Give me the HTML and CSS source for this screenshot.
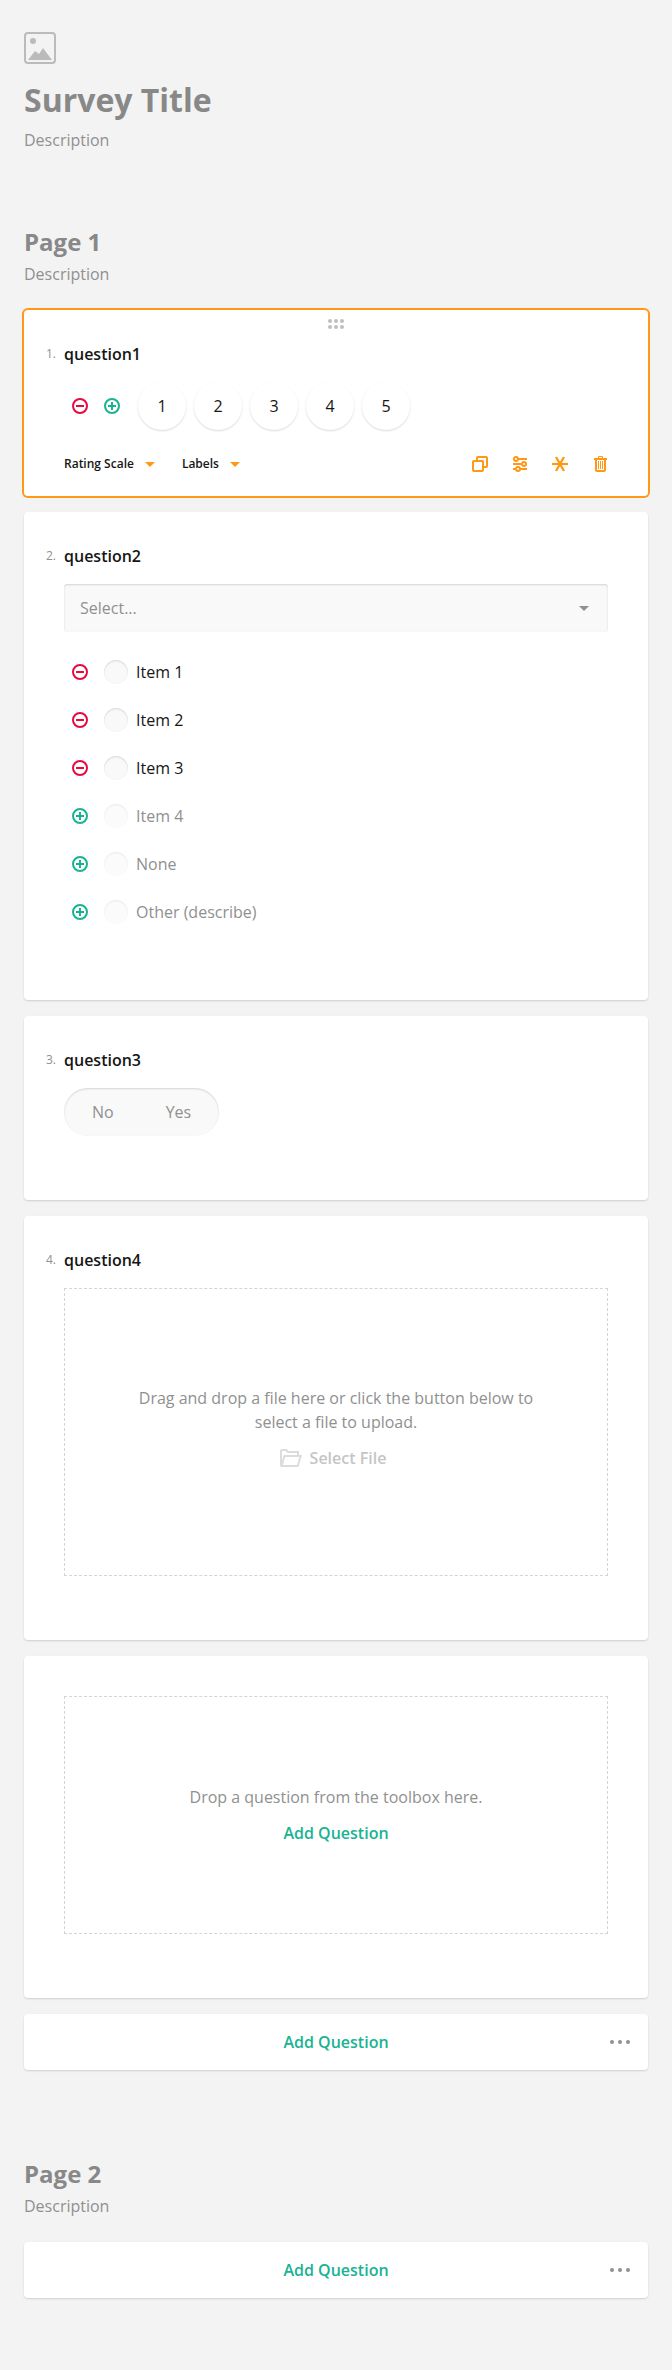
FILE: index.html
```html
<!DOCTYPE html>
<html lang="en">
<head>
<meta charset="utf-8">
<title>Survey Designer</title>
<link rel="stylesheet" href="styles.css">
</head>
<body>
<svg class="defs" width="0" height="0">
  <symbol id="minus" viewBox="0 0 16 16"><circle cx="8" cy="8" r="7" fill="none" stroke="currentColor" stroke-width="2"/><path d="M4 7h8v2H4z" fill="currentColor"/></symbol>
  <symbol id="plus" viewBox="0 0 16 16"><circle cx="8" cy="8" r="7" fill="none" stroke="currentColor" stroke-width="2"/><path d="M7 4h2v3h3v2H9v3H7V9H4V7h3z" fill="currentColor"/></symbol>
  <symbol id="arrow" viewBox="0 0 10 5"><path d="M0 0h10L5 5z" fill="currentColor"/></symbol>
  <symbol id="dots" viewBox="0 0 20 4"><g fill="currentColor"><circle cx="2" cy="2" r="2"/><circle cx="10" cy="2" r="2"/><circle cx="18" cy="2" r="2"/></g></symbol>
</svg>

<main class="survey">
  <header class="survey-header">
    <svg class="logo" viewBox="0 0 32 32"><rect x="1" y="1" width="30" height="30" rx="3" fill="none" stroke="currentColor" stroke-width="2"/><circle cx="9" cy="9" r="3" fill="currentColor"/><path d="M4 28l7-9 4 3 4-6 9 12z" fill="currentColor"/></svg>
    <h1 class="survey-title">Survey Title</h1>
    <p class="description">Description</p>
  </header>

  <section class="page">
    <h2 class="page-title">Page 1</h2>
    <p class="description">Description</p>
    <div class="cards">
      <article class="card card-selected">
        <svg class="handle" viewBox="0 0 16 10"><g fill="#bfbfbf"><circle cx="2" cy="2" r="2"/><circle cx="8" cy="2" r="2"/><circle cx="14" cy="2" r="2"/><circle cx="2" cy="8" r="2"/><circle cx="8" cy="8" r="2"/><circle cx="14" cy="8" r="2"/></g></svg>
        <h3 class="question"><span class="number">1.</span>question1</h3>
        <div class="rating">
          <svg class="icon remove"><use href="#minus"/></svg>
          <svg class="icon add"><use href="#plus"/></svg>
          <div class="rates"><span class="rate">1</span><span class="rate">2</span><span class="rate">3</span><span class="rate">4</span><span class="rate">5</span></div>
        </div>
        <footer class="toolbar">
          <span class="choice">Rating Scale<svg class="arrow"><use href="#arrow"/></svg></span>
          <span class="choice">Labels<svg class="arrow"><use href="#arrow"/></svg></span>
          <div class="actions">
            <svg class="icon" viewBox="0 0 16 16" fill="none" stroke="currentColor" stroke-width="2"><rect x="1" y="5" width="10" height="10" rx="1"/><path d="M5 5V2a1 1 0 0 1 1-1h8a1 1 0 0 1 1 1v8a1 1 0 0 1-1 1h-3"/></svg>
            <svg class="icon" viewBox="0 0 16 16" fill="none" stroke="currentColor" stroke-width="2"><path d="M6 3h9M1 8h8M1 13h2M8 13h7"/><circle cx="4" cy="3" r="2"/><circle cx="12" cy="8" r="2"/><circle cx="6" cy="13" r="2"/></svg>
            <svg class="icon" viewBox="0 0 16 16" fill="none" stroke="currentColor" stroke-width="2.300"><path d="M0 8h16" stroke-width="2"/><path d="M4 1l8 14M12 1L4 15"/></svg>
            <svg class="icon" viewBox="0 0 16 16" fill="none" stroke="currentColor"><path d="M2 3h13" stroke-width="2"/><path d="M6.500 2.500v-2h4v2M6.500 5v8M8.500 5v8M10.500 5v8"/><path d="M4 3v11a1 1 0 0 0 1 1h7a1 1 0 0 0 1-1V3" stroke-width="2"/></svg>
          </div>
        </footer>
      </article>

      <article class="card">
        <h3 class="question"><span class="number">2.</span>question2</h3>
        <div class="select">Select...<svg class="arrow"><use href="#arrow"/></svg></div>
        <ul class="items">
          <li class="item"><svg class="icon remove"><use href="#minus"/></svg><span class="radio"></span>Item 1</li>
          <li class="item"><svg class="icon remove"><use href="#minus"/></svg><span class="radio"></span>Item 2</li>
          <li class="item"><svg class="icon remove"><use href="#minus"/></svg><span class="radio"></span>Item 3</li>
          <li class="item item-off"><svg class="icon add"><use href="#plus"/></svg><span class="radio"></span>Item 4</li>
          <li class="item item-off"><svg class="icon add"><use href="#plus"/></svg><span class="radio"></span>None</li>
          <li class="item item-off"><svg class="icon add"><use href="#plus"/></svg><span class="radio"></span>Other (describe)</li>
        </ul>
      </article>

      <article class="card">
        <h3 class="question"><span class="number">3.</span>question3</h3>
        <div class="toggle"><span>No</span><span>Yes</span></div>
      </article>

      <article class="card">
        <h3 class="question"><span class="number">4.</span>question4</h3>
        <div class="drop drop-file">
          <p class="drop-text">Drag and drop a file here or click the button below to select a file to upload.</p>
          <div class="select-file"><svg class="folder" viewBox="0 0 22 18" fill="none" stroke="currentColor" stroke-width="2"><path d="M1 16.500V2a1 1 0 0 1 1-1h4l2 2h10v4"/><path d="M1.500 17L4.500 7h16.200L17.700 17z"/></svg>Select File</div>
        </div>
      </article>

      <article class="card card-empty">
        <div class="drop drop-question">
          <p class="drop-text">Drop a question from the toolbox here.</p>
          <span class="add-link">Add Question</span>
        </div>
      </article>

      <div class="add-bar"><span class="add-link">Add Question</span><svg class="dots"><use href="#dots"/></svg></div>
    </div>
  </section>

  <section class="page page-next">
    <h2 class="page-title">Page 2</h2>
    <p class="description">Description</p>
    <div class="cards">
      <div class="add-bar"><span class="add-link">Add Question</span><svg class="dots"><use href="#dots"/></svg></div>
    </div>
  </section>
</main>
</body>
</html>
```
FILE: styles.css
```css
* { box-sizing: border-box; }
body {
  margin: 0;
  min-height: 2370px;
  background: #f3f3f3;
  color: #161616;
  font: 16px/24px "Open Sans", sans-serif;
}
h1, h2, h3, p, ul { margin: 0; padding: 0; }
svg { display: block; flex: none; }
.defs { position: absolute; }
.survey { padding: 32px 24px 72px; }
.logo { width: 32px; height: 32px; color: #bbb; }
.survey-title { margin: 12px 0 4px; font-size: 32px; line-height: 48px; font-weight: 700; color: #888; }
.description { color: #909090; }
.page { padding-top: 74px; }
.page-next { padding-top: 88px; }
.page-title { margin-bottom: 4px; font-size: 24px; line-height: 32px; font-weight: 700; color: #888; }
.cards { display: flex; flex-direction: column; gap: 16px; margin-top: 24px; }

.card {
  position: relative;
  padding: 32px 40px 64px;
  background: #fff;
  border-radius: 4px;
  box-shadow: 0 1px 2px rgba(0, 0, 0, .15);
}
.card-selected { padding-bottom: 20px; box-shadow: 0 0 0 2px #ff9814; }
.card-empty { padding-top: 40px; }
.handle { position: absolute; top: 9px; left: 304px; width: 16px; height: 10px; }
.question { display: flex; margin-bottom: 16px; font-size: 16px; line-height: 24px; font-weight: 600; }
.number { width: 40px; margin-left: -40px; padding-right: 8px; text-align: right; font-size: 12px; font-weight: 400; color: #909090; }
.icon { width: 16px; height: 16px; }
.remove { color: #e60a3e; }
.add { color: #19b394; }
.arrow { width: 10px; height: 5px; }

.rating { display: flex; align-items: center; gap: 16px; padding-left: 8px; }
.rates { display: flex; gap: 8px; margin-left: 2px; }
.rate { width: 48px; height: 48px; border-radius: 50%; line-height: 48px; text-align: center; box-shadow: 0 1px 2px rgba(0, 0, 0, .15); }
.toolbar { display: flex; align-items: center; height: 24px; margin-top: 22px; }
.choice { display: flex; align-items: center; gap: 11px; margin-right: 27px; font-size: 12px; line-height: 16px; font-weight: 600; }
.choice .arrow { color: #ff9814; }
.actions { display: flex; gap: 24px; margin-left: auto; color: #ff9814; }

.select {
  display: flex; align-items: center; justify-content: space-between;
  height: 48px; padding: 0 19px 0 16px;
  border-radius: 3px; background: #f9f9f9; color: #909090;
  box-shadow: inset 0 1px 2px rgba(0, 0, 0, .15);
}
.items { margin-top: 16px; list-style: none; }
.item { display: flex; align-items: center; height: 48px; padding-left: 8px; }
.radio { width: 24px; height: 24px; margin: 0 8px 0 16px; border-radius: 50%; background: #f9f9f9; box-shadow: inset 0 1px 2px rgba(0, 0, 0, .15); }
.item-off { color: #909090; }
.item-off .radio { opacity: .5; }
.toggle {
  display: inline-flex; gap: 4px; padding: 12px 4px; vertical-align: top;
  border-radius: 24px; background: #f9f9f9; color: #909090;
  box-shadow: inset 0 1px 2px rgba(0, 0, 0, .15);
}
.toggle span { padding: 0 24px; }

.drop {
  display: flex; flex-direction: column; align-items: center; justify-content: center;
  border: 1px dashed #d4d4d4; text-align: center; color: #909090;
}
.drop-file { height: 288px; gap: 12px; padding: 0 64px 8px; }
.drop-question { height: 238px; gap: 12px; }
.select-file { display: flex; align-items: center; gap: 8px; padding-right: 6px; font-weight: 600; color: #c5c5c5; }
.folder { width: 22px; height: 18px; color: #dcdcdc; }
.add-link { font-weight: 600; color: #19b394; }
.add-bar {
  position: relative;
  display: flex; align-items: center; justify-content: center;
  height: 56px; border-radius: 4px; background: #fff;
  box-shadow: 0 1px 2px rgba(0, 0, 0, .15);
}
.dots { position: absolute; right: 18px; width: 20px; height: 4px; color: #909090; }
```
